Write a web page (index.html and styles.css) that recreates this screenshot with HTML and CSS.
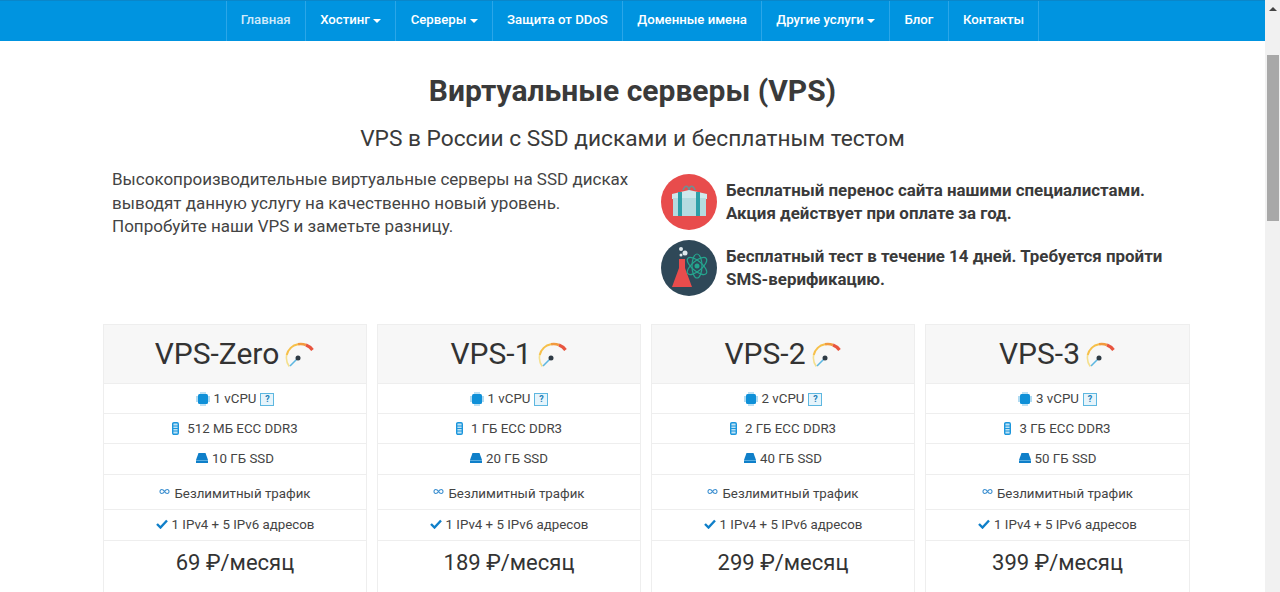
FILE: index.html
```html
<!DOCTYPE html>
<html lang="ru">
<head>
    <meta charset="UTF-8">
    <meta name="viewport" content="width=device-width, initial-scale=1.0">
    <title>Виртуальные серверы (VPS)</title>
    <link rel="stylesheet" href="styles.css">
</head>
<body>
    <svg class="sprites" width="0" height="0">
        <defs>
            <symbol id="gauge" viewBox="0 0 30 26">
                <path d="M4.300 24.400A14 14 0 0 1 1.700 13" fill="none" stroke="#f5e08e" stroke-width="1.600"/>
                <path d="M1.700 13A14 14 0 0 1 13 2.200" fill="none" stroke="#f6c04a" stroke-width="2"/>
                <path d="M13 2.200A14 14 0 0 1 21 3" fill="none" stroke="#f29a3e" stroke-width="2.600"/>
                <path d="M21 3A14 14 0 0 1 27.500 8" fill="none" stroke="#e8553f" stroke-width="3.200"/>
                <path d="M13 16L5 24" fill="none" stroke="#5db7e0" stroke-width="1.600"/>
                <circle cx="13" cy="16" r="2.500" fill="#2f3b45"/>
            </symbol>
            <symbol id="cpu" viewBox="0 0 14 14">
                <rect x="2" y="2" width="10" height="10" rx="1.500" fill="#0f90d8"/>
                <path d="M1 4v6M13 4v6M4 1h6M4 13h6" stroke="#7cc3ea" stroke-width="1.200"/>
            </symbol>
            <symbol id="ram" viewBox="0 0 7 13">
                <rect x="0.700" y="0.700" width="5.600" height="11.600" rx="1.200" fill="#bfe3f5" stroke="#1c96dc" stroke-width="1.400"/>
                <path d="M1 4h5M1 6.500h5M1 9h5" stroke="#1c96dc"/>
            </symbol>
            <symbol id="disk" viewBox="0 0 12 10">
                <path d="M2.500 0h7L12 7v3H0V7z" fill="#0f7fc9"/>
                <path d="M0 7.500h12" stroke="#7cc3ea" stroke-width="0.700"/>
            </symbol>
            <symbol id="infinity" viewBox="0 0 11 7">
                <path d="M5.500 3.500C4 1 1 .8 1 3.500S4 6 5.500 3.500 10 .8 10 3.500 7 6 5.500 3.500z" fill="none" stroke="#3c8fd0" stroke-width="1.100"/>
            </symbol>
            <symbol id="check" viewBox="0 0 12 10">
                <path d="M1 5l3.500 3.500L11 1.500" fill="none" stroke="#0f7fc9" stroke-width="2.400"/>
            </symbol>
        </defs>
    </svg>

    <div class="window">
        <div class="page">
            <nav class="topnav">
                <ul>
                    <li><a href="#home" class="dim">Главная</a></li>
                    <li><a href="#hosting">Хостинг <span class="caret"></span></a></li>
                    <li><a href="#servers">Серверы <span class="caret"></span></a></li>
                    <li><a href="#ddos">Защита от DDoS</a></li>
                    <li><a href="#domains">Доменные имена</a></li>
                    <li><a href="#other">Другие услуги <span class="caret"></span></a></li>
                    <li><a href="#blog">Блог</a></li>
                    <li><a href="#contacts">Контакты</a></li>
                </ul>
            </nav>

            <main class="content">
                <h1>Виртуальные серверы (VPS)</h1>
                <h2>VPS в России с SSD дисками и бесплатным тестом</h2>

                <div class="intro">
                    <p class="lead">Высокопроизводительные виртуальные серверы на SSD дисках выводят данную услугу на качественно новый уровень. Попробуйте наши VPS и заметьте разницу.</p>
                    <div class="perks">
                        <div class="perk">
                            <svg class="perk-icon" viewBox="0 0 56 56">
                                <circle cx="28" cy="28" r="28" fill="#e84c4c"/>
                                <path d="M22 16c2-5 5-5 6 0 1-5 4-5 6 0" fill="none" stroke="#6f8f93" stroke-width="1.600"/>
                                <path d="M11 20l17-4 18 4v5H11z" fill="#cfe8ec"/>
                                <rect x="12" y="24" width="33" height="18" fill="#b5dbe0"/>
                                <rect x="17" y="18" width="4" height="24" fill="#2e9fa8"/>
                                <rect x="35" y="18" width="4" height="24" fill="#2e9fa8"/>
                            </svg>
                            <p>Бесплатный перенос сайта нашими специалистами. Акция действует при оплате за год.</p>
                        </div>
                        <div class="perk">
                            <svg class="perk-icon" viewBox="0 0 56 56">
                                <circle cx="28" cy="28" r="28" fill="#2f4858"/>
                                <circle cx="20" cy="9" r="2" fill="#dfe8ec"/>
                                <circle cx="24" cy="13" r="2.500" fill="#dfe8ec"/>
                                <circle cx="20" cy="15" r="1.500" fill="#dfe8ec"/>
                                <path d="M18 19h6v9l7 19H11l7-19z" fill="#e84c4c"/>
                                <g fill="none" stroke="#25a58e" stroke-width="1.200">
                                    <ellipse cx="36" cy="26" rx="12" ry="5" transform="rotate(40 36 26)"/>
                                    <ellipse cx="36" cy="26" rx="12" ry="5" transform="rotate(-40 36 26)"/>
                                    <ellipse cx="36" cy="26" rx="5" ry="12"/>
                                </g>
                                <circle cx="36" cy="26" r="2.500" fill="#25a58e"/>
                            </svg>
                            <p>Бесплатный тест в течение 14 дней. Требуется пройти SMS-верификацию.</p>
                        </div>
                    </div>
                </div>

                <div class="plans">
                    <section class="plan">
                        <h3>VPS-Zero <svg class="gauge"><use href="#gauge"/></svg></h3>
                        <div class="row"><svg class="ico-cpu"><use href="#cpu"/></svg> 1 vCPU <span class="help">?</span></div>
                        <div class="row"><svg class="ico-ram"><use href="#ram"/></svg> 512 МБ ECC DDR3</div>
                        <div class="row mid"><svg class="ico-disk"><use href="#disk"/></svg> 10 ГБ SSD</div>
                        <div class="row tall"><svg class="ico-inf"><use href="#infinity"/></svg> Безлимитный трафик</div>
                        <div class="row mid"><svg class="ico-check"><use href="#check"/></svg> 1 IPv4 + 5 IPv6 адресов</div>
                        <div class="price">69 ₽/месяц</div>
                    </section>
                    <section class="plan">
                        <h3>VPS-1 <svg class="gauge"><use href="#gauge"/></svg></h3>
                        <div class="row"><svg class="ico-cpu"><use href="#cpu"/></svg> 1 vCPU <span class="help">?</span></div>
                        <div class="row"><svg class="ico-ram"><use href="#ram"/></svg> 1 ГБ ECC DDR3</div>
                        <div class="row mid"><svg class="ico-disk"><use href="#disk"/></svg> 20 ГБ SSD</div>
                        <div class="row tall"><svg class="ico-inf"><use href="#infinity"/></svg> Безлимитный трафик</div>
                        <div class="row mid"><svg class="ico-check"><use href="#check"/></svg> 1 IPv4 + 5 IPv6 адресов</div>
                        <div class="price">189 ₽/месяц</div>
                    </section>
                    <section class="plan">
                        <h3>VPS-2 <svg class="gauge"><use href="#gauge"/></svg></h3>
                        <div class="row"><svg class="ico-cpu"><use href="#cpu"/></svg> 2 vCPU <span class="help">?</span></div>
                        <div class="row"><svg class="ico-ram"><use href="#ram"/></svg> 2 ГБ ECC DDR3</div>
                        <div class="row mid"><svg class="ico-disk"><use href="#disk"/></svg> 40 ГБ SSD</div>
                        <div class="row tall"><svg class="ico-inf"><use href="#infinity"/></svg> Безлимитный трафик</div>
                        <div class="row mid"><svg class="ico-check"><use href="#check"/></svg> 1 IPv4 + 5 IPv6 адресов</div>
                        <div class="price">299 ₽/месяц</div>
                    </section>
                    <section class="plan">
                        <h3>VPS-3 <svg class="gauge"><use href="#gauge"/></svg></h3>
                        <div class="row"><svg class="ico-cpu"><use href="#cpu"/></svg> 3 vCPU <span class="help">?</span></div>
                        <div class="row"><svg class="ico-ram"><use href="#ram"/></svg> 3 ГБ ECC DDR3</div>
                        <div class="row mid"><svg class="ico-disk"><use href="#disk"/></svg> 50 ГБ SSD</div>
                        <div class="row tall"><svg class="ico-inf"><use href="#infinity"/></svg> Безлимитный трафик</div>
                        <div class="row mid"><svg class="ico-check"><use href="#check"/></svg> 1 IPv4 + 5 IPv6 адресов</div>
                        <div class="price">399 ₽/месяц</div>
                    </section>
                </div>
            </main>
        </div>

        <div class="scrollbar">
            <div class="scroll-arrow"></div>
            <div class="scroll-thumb"></div>
        </div>
    </div>
</body>
</html>
```

FILE: styles.css
```css
* {
    box-sizing: border-box;
}
html, body {
    height: 100%;
    margin: 0;
    overflow: hidden;
}
body {
    font-family: Roboto, 'Liberation Sans', sans-serif;
    background-color: #fff;
    color: #333;
}
.sprites {
    display: block;
    height: 0;
}
.window {
    display: flex;
    height: 592px;
}
.page {
    flex: 1;
    min-width: 0;
    overflow: hidden;
}
.topnav {
    height: 41px;
    background-color: #0094e0;
    border-top: 1px solid #0a86c9;
}
.topnav ul {
    display: flex;
    justify-content: center;
    list-style-type: none;
    margin: 0;
    padding: 0;
    height: 40px;
}
.topnav li {
    border-right: 1px solid #2ba6e8;
}
.topnav li:first-child {
    border-left: 1px solid #2ba6e8;
}
.topnav a {
    display: block;
    padding: 0 14.250px;
    line-height: 38px;
    color: #fff;
    font-size: 13.200px;
    font-weight: 500;
    text-decoration: none;
}
.topnav a.dim {
    color: #cfeafa;
}
.caret {
    display: inline-block;
    vertical-align: middle;
    border-top: 4px solid #fff;
    border-left: 4px solid transparent;
    border-right: 4px solid transparent;
}
.content {
    padding-top: 30px;
}
h1 {
    margin: 0;
    text-align: center;
    font-size: 30px;
    line-height: 40px;
    font-weight: 700;
    color: #3a3a3a;
}
h2 {
    margin: 13px 0 0;
    text-align: center;
    font-size: 22.700px;
    line-height: 30px;
    font-weight: 400;
    color: #3a3a3a;
}
.intro {
    display: flex;
    margin: 14px 0 0 112px;
}
.lead {
    width: 525px;
    margin: 0;
    font-size: 17px;
    line-height: 23.500px;
    color: #444;
}
.perks {
    margin: 6px 0 0 24px;
    width: 510px;
}
.perk {
    display: flex;
    align-items: center;
    gap: 9px;
    margin-bottom: 10px;
}
.perk p {
    margin: 0;
    font-size: 16.900px;
    line-height: 23.500px;
    font-weight: 700;
    color: #3a3a3a;
}
.perk-icon {
    width: 56px;
    height: 56px;
    flex: none;
}
.plans {
    display: flex;
    gap: 10px;
    margin: 18px 0 0 103px;
}
.plan {
    width: 264px;
    flex: none;
    border: 1px solid #eee;
}
.plan:last-child {
    width: 265px;
}
.plan h3 {
    margin: 0;
    height: 58px;
    padding-bottom: 2px;
    display: flex;
    align-items: center;
    justify-content: center;
    gap: 6px;
    background-color: #f7f7f7;
    font-size: 30px;
    font-weight: 400;
    color: #333;
}
.gauge {
    width: 30px;
    height: 26px;
    margin-top: 4px;
}
.row {
    height: 30px;
    display: flex;
    align-items: center;
    justify-content: center;
    gap: 4px;
    border-top: 1px solid #eee;
    font-size: 13.300px;
    color: #444;
}
.row.mid {
    height: 31px;
    padding-bottom: 2px;
}
.row.tall {
    height: 35px;
    padding-top: 2px;
}
.ico-cpu {
    width: 14px;
    height: 14px;
}
.ico-ram {
    width: 7px;
    height: 13px;
    margin-right: 4px;
}
.ico-disk {
    width: 12px;
    height: 10px;
}
.ico-inf {
    width: 11px;
    height: 7px;
    margin-bottom: 3px;
}
.ico-check {
    width: 12px;
    height: 10px;
}
.help {
    width: 14px;
    height: 13px;
    border: 1px solid #5db7e0;
    background-color: #e6f4fb;
    color: #1c7fb8;
    font-size: 9px;
    font-weight: 700;
    line-height: 11px;
    text-align: center;
    margin-top: 2px;
}
.price {
    height: 90px;
    padding-bottom: 46px;
    border-top: 1px solid #eee;
    display: flex;
    align-items: center;
    justify-content: center;
    font-size: 22px;
    color: #333;
}
.scrollbar {
    width: 15px;
    flex: none;
    background-color: #f1f1f1;
    padding-top: 7px;
}
.scroll-arrow {
    width: 0;
    margin: 0 auto;
    border-bottom: 4px solid #444;
    border-left: 4px solid transparent;
    border-right: 4px solid transparent;
}
.scroll-thumb {
    height: 166px;
    margin: 44px 1px 0 2px;
    background-color: #a8a8a8;
}
```
